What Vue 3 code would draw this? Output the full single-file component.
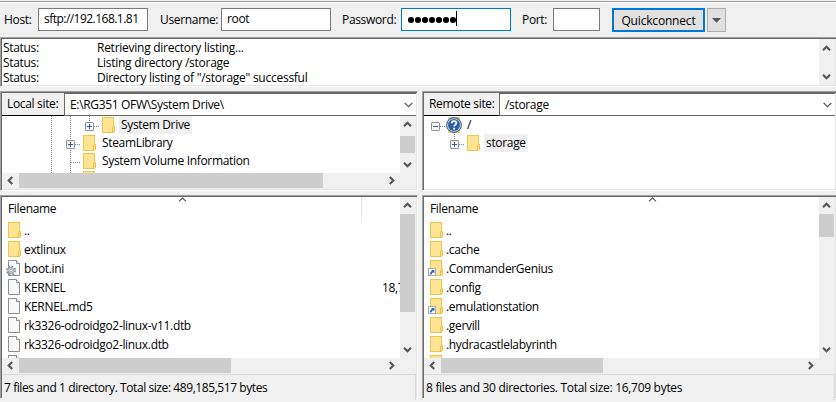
<script setup>
import { h } from 'vue'

const log = [
  'Retrieving directory listing...',
  'Listing directory /storage',
  'Directory listing of "/storage" successful',
]

// Guide cells: "line" = full guide, "top" = guide above the expander only,
// "tee" = branch without expander, "gap" = empty
const localTree = [
  { cells: ['line', 'line', 'plus top'], icon: 'folder', name: 'System Drive', selected: true },
  { cells: ['line', 'plus line'], icon: 'folder', name: 'SteamLibrary' },
  { cells: ['line', 'tee line'], icon: 'folder', name: 'System Volume Information' },
  { cells: ['line', 'tee line'], icon: 'folder', name: '' },
]
const remoteTree = [
  { cells: ['minus'], icon: 'unknown', name: '/' },
  { cells: ['gap', 'plus top'], icon: 'folder', name: 'storage', selected: true },
]

const panes = [
  {
    id: 'local',
    label: 'Local site:',
    path: 'E:\\RG351 OFW\\System Drive\\',
    tree: localTree,
    treeScroll: true,
    files: [
      { icon: 'folder', name: '..' },
      { icon: 'folder', name: 'extlinux' },
      { icon: 'config', name: 'boot.ini' },
      { icon: 'file', name: 'KERNEL', size: '18,7' },
      { icon: 'file', name: 'KERNEL.md5' },
      { icon: 'file', name: 'rk3326-odroidgo2-linux-v11.dtb' },
      { icon: 'file', name: 'rk3326-odroidgo2-linux.dtb' },
      { icon: 'file', name: '' },
    ],
    vThumb: 98,
    hThumb: 212,
    status: '7 files and 1 directory. Total size: 489,185,517 bytes',
  },
  {
    id: 'remote',
    label: 'Remote site:',
    path: '/storage',
    tree: remoteTree,
    treeScroll: false,
    files: [
      { icon: 'folder', name: '..' },
      { icon: 'folder', name: '.cache' },
      { icon: 'link', name: '.CommanderGenius' },
      { icon: 'folder', name: '.config' },
      { icon: 'link', name: '.emulationstation' },
      { icon: 'folder', name: '.gervill' },
      { icon: 'folder', name: '.hydracastlelabyrinth' },
      { icon: 'folder', name: '' },
    ],
    vThumb: 23,
    hThumb: 162,
    status: '8 files and 30 directories. Total size: 16,709 bytes',
  },
]

const chevrons = {
  up: 'M1 6.2 L4.5 2.7 L8 6.2',
  down: 'M1 2.8 L4.5 6.3 L8 2.8',
  left: 'M6.2 1 L2.7 4.5 L6.2 8',
  right: 'M2.8 1 L6.3 4.5 L2.8 8',
}
const Chevron = (props) =>
  h('svg', { width: 9, height: 9, viewBox: '0 0 9 9' }, [
    h('path', { d: chevrons[props.dir], fill: 'none', stroke: '#555', 'stroke-width': 2.1 }),
  ])
Chevron.props = ['dir']

const folder = () => [
  h('rect', { x: 2.5, y: 0.5, width: 11, height: 15, fill: '#ffe593', stroke: '#edc54c' }),
  h('path', { d: 'M12.5 15.5 V10.2 L13.5 9.5 H14.5 V14.5 L13.5 15.5 Z', fill: '#ffe086', stroke: '#e9be45' }),
]
const page = () => [
  h('path', { d: 'M2.5 0.5 H10.5 L13.5 3.5 V15.5 H2.5 Z', fill: '#f8f9fa', stroke: '#8e8e8e' }),
  h('path', { d: 'M10.5 0.5 V3.5 H13.5', fill: '#fff', stroke: '#8e8e8e' }),
]
const Icon = (props) => {
  const kinds = {
    folder,
    file: page,
    config: () => [
      ...page(),
      h('circle', { cx: 5, cy: 10.5, r: 4.2, fill: 'none', stroke: '#8b949a', 'stroke-width': 1.8, 'stroke-dasharray': '1.8 1.5' }),
      h('circle', { cx: 5, cy: 10.5, r: 3, fill: '#cfd5d9', stroke: '#949da3' }),
      h('circle', { cx: 5, cy: 10.5, r: 1.2, fill: '#fff', stroke: '#8b949a', 'stroke-width': 0.7 }),
    ],
    link: () => [
      ...folder(),
      h('rect', { x: 0.5, y: 8.5, width: 7, height: 7, fill: '#fff', stroke: '#a9adb3' }),
      h('path', { d: 'M3 10 H6.4 V13.4 L5.2 12.2 C4.2 12.7 3.7 13.4 3.5 14.4 H1.8 C1.8 12.8 2.8 11.6 4.1 11.1 Z', fill: '#2b66b1' }),
    ],
    unknown: () => [
      h('rect', { x: 2, y: 0, width: 12, height: 16, fill: '#f3cf5b' }),
      h('circle', { cx: 8, cy: 8, r: 7.4, fill: '#d3dfee', stroke: '#3f69a2', 'stroke-width': 1.1 }),
      h('circle', { cx: 8, cy: 8, r: 6, fill: '#2f5f9f' }),
      h('path', { d: 'M5.7 6.3 C5.7 3.4 10.4 3.4 10.4 6 C10.4 7.6 8.1 7.7 8.1 9.5', fill: 'none', stroke: '#fff', 'stroke-width': 1.7 }),
      h('rect', { x: 7.2, y: 10.8, width: 1.8, height: 1.8, fill: '#fff' }),
    ],
  }
  return h('svg', { width: 16, height: 16, viewBox: '0 0 16 16' }, kinds[props.kind]())
}
Icon.props = ['kind']
</script>

<template>
  <main class="window">
    <header class="quickbar">
      <label class="l-host">Host:</label>
      <div class="input w-host">sftp://192.168.1.81</div>
      <label class="l-user">Username:</label>
      <div class="input w-user">root</div>
      <label class="l-pass">Password:</label>
      <div class="input w-pass focused">
        <i v-for="n in 7" :key="n" class="dot"></i><i class="caret"></i>
      </div>
      <label class="l-port">Port:</label>
      <div class="input w-port"></div>
      <button class="connect">Quickconnect</button>
      <button class="drop">
        <svg width="9" height="5" viewBox="0 0 9 5"><path d="M0 0 H9 L4.5 4.8 Z" fill="#555" /></svg>
      </button>
    </header>

    <section class="sunken log">
      <div class="log-lines">
        <div v-for="l in log" :key="l" class="log-line">
          <span class="kind">Status:</span><span class="message">{{ l }}</span>
        </div>
      </div>
      <div class="vbar log-bar">
        <span class="cap"><Chevron dir="up" /></span>
        <span class="cap"><Chevron dir="down" /></span>
      </div>
    </section>

    <div class="panes">
      <div v-for="p in panes" :key="p.id" class="pane" :class="p.id">
        <section class="sunken site">
          <div class="site-row">
            <div class="site-label">{{ p.label }}</div>
            <div class="combo">
              <span class="path">{{ p.path }}</span>
              <svg width="9" height="6" viewBox="0 0 9 6"><path d="M0.6 0.8 L4.5 4.7 L8.4 0.8" fill="none" stroke="#555" stroke-width="1.2" /></svg>
            </div>
          </div>
          <div class="tree-area">
            <div class="tree">
              <div v-for="(r, i) in p.tree" :key="i" class="tree-row">
                <span v-for="(c, j) in r.cells" :key="j" class="cell" :class="c">
                  <svg v-if="/plus|minus/.test(c)" width="9" height="9" viewBox="0 0 9 9">
                    <rect x="0.5" y="0.5" width="8" height="8" rx="0.6" fill="#f6f6f6" stroke="#919191" />
                    <path :d="/plus/.test(c) ? 'M2 4.5 H7 M4.5 2 V7' : 'M2 4.5 H7'" stroke="#3b55a0" fill="none" />
                  </svg>
                </span>
                <Icon :kind="r.icon" class="tree-icon" />
                <span class="node" :class="{ selected: r.selected }">{{ r.name }}</span>
              </div>
            </div>
            <div v-if="p.treeScroll" class="vbar">
              <span class="cap"><Chevron dir="up" /></span>
              <span class="thumb tree-thumb"></span>
              <span class="fill"></span>
              <span class="cap"><Chevron dir="down" /></span>
            </div>
          </div>
          <div v-if="p.treeScroll" class="hbar">
            <span class="cap"><Chevron dir="left" /></span>
            <span class="thumb tree-hthumb"></span>
            <span class="fill"></span>
            <span class="cap"><Chevron dir="right" /></span>
          </div>
        </section>

        <section class="sunken listing">
          <div class="list-area">
            <div class="list">
              <div class="list-head">
                <span>Filename</span>
                <svg class="sort" width="9" height="5" viewBox="0 0 9 5"><path d="M1 4.4 L4.5 0.9 L8 4.4" fill="none" stroke="#5a5a5a" stroke-width="1.1" /></svg>
              </div>
              <div v-for="(f, i) in p.files" :key="i" class="file">
                <Icon :kind="f.icon" />
                <span class="fname">{{ f.name }}</span>
                <span v-if="f.size" class="size">{{ f.size }}</span>
              </div>
            </div>
            <div class="vbar">
              <span class="cap"><Chevron dir="up" /></span>
              <span class="thumb" :style="{ height: p.vThumb + 'px' }"></span>
              <span class="fill"></span>
              <span class="cap"><Chevron dir="down" /></span>
            </div>
          </div>
          <div class="hbar">
            <span class="cap"><Chevron dir="left" /></span>
            <span class="thumb" :style="{ width: p.hThumb + 'px' }"></span>
            <span class="fill"></span>
            <span class="cap"><Chevron dir="right" /></span>
          </div>
          <div class="status"><span>{{ p.status }}</span></div>
        </section>
      </div>
    </div>
  </main>
</template>

<style>
body {
  margin: 0;
  overflow: hidden;
}
</style>

<style scoped>
* {
  box-sizing: border-box;
}
.window {
  width: 836px;
  height: 402px;
  overflow: hidden;
  background: #f0f0f0;
  color: #000;
  font: 12px/15px "Open Sans", "Noto Sans", sans-serif;
  letter-spacing: -0.33px;
  white-space: pre;
  display: flex;
  flex-direction: column;
}
svg {
  display: block;
  flex: none;
}

/* quickconnect bar */
.quickbar {
  height: 37px;
  flex: none;
  display: flex;
  align-items: flex-start;
  padding: 8px 0 0 4px;
  background: linear-gradient(#f0f0f0 1px, #a0a0a0 1px 2px, #fff 2px 3px, #f0f0f0 3px);
}
.quickbar label {
  line-height: 24px;
  flex: none;
}
.l-host { width: 34px; }
.l-user { width: 73px; padding-left: 12px; }
.l-pass { width: 70px; padding-left: 11px; }
.l-port { width: 42px; padding-left: 11px; }
.input {
  height: 23px;
  border: 1px solid #7a7a7a;
  background: #fff;
  padding-left: 5px;
  line-height: 20px;
  flex: none;
  display: flex;
}
.w-host,
.w-user,
.w-pass { width: 110px; }
.w-host { letter-spacing: -0.53px; }
.w-port { width: 47px; }
.input.focused {
  border-color: #0078d7;
  padding-left: 6px;
}
.dot {
  width: 5.6px;
  height: 5.6px;
  margin: 8px 1.4px 0 0;
  border-radius: 50%;
  background: #000;
}
.caret {
  width: 1px;
  height: 15px;
  margin: 2px 0 0 -1px;
  background: #000;
}
button {
  font: inherit;
  letter-spacing: inherit;
  color: inherit;
  padding: 0;
  background: #e1e1e1;
  border: 1px solid #adadad;
  height: 24px;
  display: flex;
  align-items: center;
  justify-content: center;
}
.connect {
  width: 93px;
  margin-left: 12px;
  border: 2px solid #0078d7;
  letter-spacing: -0.18px;
}
.drop {
  width: 19px;
  margin-left: 2px;
}

/* sunken frames */
.sunken {
  border: 1px solid;
  border-color: #a0a0a0 #fff #fff #a0a0a0;
  display: flex;
  flex-direction: column;
  background: #fff;
  box-shadow: inset 1px 1px #696969, inset -1px -1px #e3e3e3;
  padding: 1px;
}
.log {
  width: 837px;
  height: 50px;
  flex: none;
  flex-direction: row;
}
.log-lines {
  flex: 1;
  padding-top: 1px;
}
.log-line {
  display: flex;
}
.kind {
  width: 95px;
  padding-left: 1px;
}
.message { letter-spacing: -0.26px; }
.log-bar { justify-content: space-between; }

/* scroll bars */
.vbar {
  width: 16px;
  padding-right: 1px;
  flex: none;
  background: #f0f0f0;
  display: flex;
  flex-direction: column;
}
.hbar {
  height: 16px;
  padding: 0 16px 1px 0;
  flex: none;
  background: #f0f0f0;
  display: flex;
}
.cap {
  width: 17px;
  height: 15px;
  flex: none;
  display: flex;
  align-items: center;
  justify-content: center;
}
.vbar .cap {
  width: 15px;
  height: 17px;
}
.log-bar .cap { height: 18px; }
.thumb {
  background: #cdcdcd;
  flex: none;
}
.tree-thumb { height: 17px; margin-top: 3px; }
.tree-hthumb { width: 304px; }
.fill { flex: 1; }

/* panes */
.panes {
  display: flex;
  gap: 4px;
  margin-top: 4px;
}
.pane {
  width: 418px;
  flex: none;
  display: flex;
  flex-direction: column;
  gap: 4px;
}
.remote { width: 415px; }
.site { height: 100px; }
.site-row {
  height: 23px;
  flex: none;
  display: flex;
}
.site-label {
  width: 62px;
  padding-left: 5px;
  line-height: 21px;
  background: #f0f0f0;
  border-bottom: 1px solid #000;
}
.remote .site-label { width: 75px; }
.combo {
  flex: 1;
  border: 1px solid #696969;
  border-right: 0;
  display: flex;
  align-items: center;
  justify-content: space-between;
  padding: 0 3px 0 5px;
}
.path { line-height: 21px; }
.tree-area {
  flex: 1;
  min-height: 0;
  display: flex;
}
.tree {
  flex: 1;
  overflow: hidden;
  padding-left: 40px;
}
.remote .tree { padding-left: 2px; }
.tree-row {
  height: 18px;
  display: flex;
}
.cell {
  width: 19px;
  flex: none;
  padding: 6px 0 0 5px;
}
.line {
  background: repeating-linear-gradient(#808080 0 1px, #fff 1px 2px) 9px 0 / 1px 18px no-repeat;
}
.top {
  background: repeating-linear-gradient(#808080 0 1px, #fff 1px 2px) 9px 0 / 1px 6px no-repeat,
    repeating-linear-gradient(90deg, #fff 0 1px, #808080 1px 2px) 13px 10px / 6px 1px no-repeat;
}
.minus {
  background: repeating-linear-gradient(90deg, #fff 0 1px, #808080 1px 2px) 13px 10px / 6px 1px no-repeat;
}
.plus.line,
.tee.line {
  background: repeating-linear-gradient(#808080 0 1px, #fff 1px 2px) 9px 0 / 1px 18px no-repeat,
    repeating-linear-gradient(90deg, #808080 0 1px, #fff 1px 2px) 10px 10px / 9px 1px no-repeat;
}
.tree-icon { margin: 1px 3px 0 1px; }
.node {
  padding: 0 2px;
  line-height: 18px;
}
.selected { background: #f0f0f0; }

/* listings */
.listing { height: 204px; }
.list-area {
  height: 161px;
  flex: none;
  display: flex;
}
.list {
  flex: 1;
  overflow: hidden;
}
.list-head {
  height: 24px;
  position: relative;
  padding-left: 6px;
  line-height: 24px;
}
.local .list-head {
  width: 360px;
  border-right: 1px solid #e5e5e5;
}
.sort {
  position: absolute;
  top: 0;
  left: 176px;
}
.remote .sort { left: 224px; }
.file {
  height: 19px;
  display: flex;
  padding: 1px 0 0 4px;
}
.fname {
  width: 360px;
  padding-left: 2px;
  line-height: 18px;
  flex: none;
}
.size { line-height: 18px; flex: none; }
.status {
  flex: 1;
  background: #f0f0f0;
  border: 1px solid #d9d9d9;
  border-width: 1px 1px 0 0;
  padding-left: 2px;
  line-height: 25px;
  letter-spacing: -0.3px;
}
.local .status { letter-spacing: -0.42px; }
</style>
